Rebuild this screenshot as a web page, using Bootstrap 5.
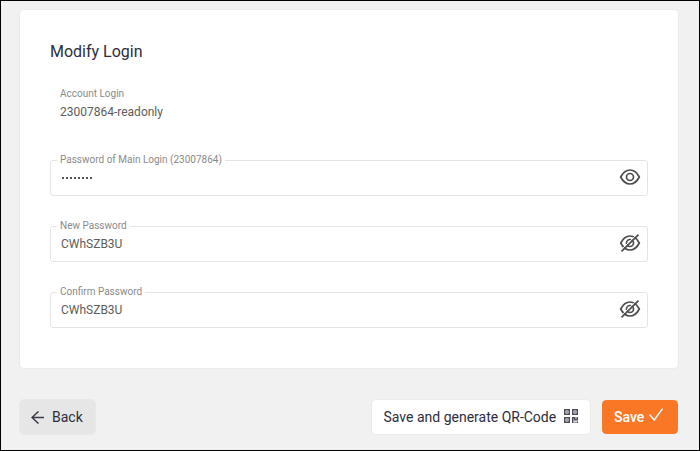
<!DOCTYPE html>
<html lang="en">
<head>
<meta charset="utf-8">
<meta name="viewport" content="width=device-width, initial-scale=1">
<title>Modify Login</title>
<link href="https://cdn.jsdelivr.net/npm/bootstrap@5.3.0/dist/css/bootstrap.min.css" rel="stylesheet">
<style>
body { font-family: Roboto, sans-serif; background: #f1f1f1; color: #2c2d3e; }
.page { height: 451px; border: 1px solid #000; padding: 8px 20px 0 18px; overflow: hidden; }
.panel { height: 360px; border: 1px solid #ebebeb; border-radius: 5px; padding: 30px; }
.title { font-size: 16px; line-height: 24px; font-weight: 400; margin: 0; }
.caption { font-size: 10px; line-height: 12px; color: #8a8a8a; }
.account { padding-left: 10px; margin-top: 24px; height: 72px; }
.value { font-size: 12px; line-height: 16px; color: #5c5c5c; }
.account .value { margin-top: 4px; }
.field { height: 36px; border: 1px solid #e4e4e4; border-radius: 3px; margin: 6px 0 30px; padding: 0 6px 0 10px; }
.field .caption { top: -7px; left: 6px; padding: 0 3px; background: #fff; white-space: nowrap; }
.field input { border: 0; outline: 0; padding: 0; font-size: 12px; line-height: 16px; color: #5c5c5c; background: none; }
.dots { gap: 2px; padding: 0 0 1px 1px; }
.dots i { width: 2px; height: 2px; background: #555; }
.eye { width: 22px; height: 18px; margin-bottom: 2px; fill: none; stroke: #4e4e4e; stroke-width: 1.700; }
.actions { margin-top: 30px; }
.act { height: 36px; font-size: 14px; line-height: 20px; border-radius: 5px; padding: 0 11px; color: #2c2d3e; border: 1px solid #ebebeb; white-space: nowrap; }
.act-back { background: #e6e6e6; border-color: #e9e9e9; width: 77px; }
.act-qr { background: #fff; width: 220px; padding-left: 11.500px; }
.qr { margin: 0 0 2px 7.500px; }
.act-save { background: #fa7726; border: 1px solid #f6f1ee; background-clip: padding-box; color: #fff; width: 78px; margin-left: 10px; padding-left: 12px; font-weight: 500; gap: 5px; }
</style>
</head>
<body>
<main class="page">
  <section class="panel bg-white">
    <h1 class="title">Modify Login</h1>
    <div class="account">
      <div class="caption">Account Login</div>
      <div class="value">23007864-readonly</div>
    </div>
    <div class="field position-relative d-flex align-items-center justify-content-between mt-0">
      <label class="caption position-absolute">Password of Main Login (23007864)</label>
      <div class="dots d-flex" aria-label="Hidden password"><i></i><i></i><i></i><i></i><i></i><i></i><i></i><i></i></div>
      <svg class="eye" viewBox="0 0 22 18"><path d="M1.700 9C4.200 4.100 7.300 2 11 2s6.800 2.100 9.300 7c-2.500 4.900-5.600 7-9.300 7S4.200 13.900 1.700 9z"/><circle cx="11" cy="9" r="3.500"/></svg>
    </div>
    <div class="field position-relative d-flex align-items-center justify-content-between">
      <label class="caption position-absolute" for="np">New Password</label>
      <input id="np" type="text" value="CWhSZB3U">
      <svg class="eye" viewBox="0 0 22 18"><path d="M1.700 9C4.200 4.100 7.300 2 11 2s6.800 2.100 9.300 7c-2.500 4.900-5.600 7-9.300 7S4.200 13.900 1.700 9z"/><circle cx="11" cy="9" r="3.500"/><path d="M1.500 16.300 18.300 0" stroke="#fff" stroke-width="1"/><path d="M2.500 17.300 19.500.7"/></svg>
    </div>
    <div class="field position-relative d-flex align-items-center justify-content-between">
      <label class="caption position-absolute" for="cp">Confirm Password</label>
      <input id="cp" type="text" value="CWhSZB3U">
      <svg class="eye" viewBox="0 0 22 18"><path d="M1.700 9C4.200 4.100 7.300 2 11 2s6.800 2.100 9.300 7c-2.500 4.900-5.600 7-9.300 7S4.200 13.900 1.700 9z"/><circle cx="11" cy="9" r="3.500"/><path d="M1.500 16.300 18.300 0" stroke="#fff" stroke-width="1"/><path d="M2.500 17.300 19.500.7"/></svg>
    </div>
  </section>
  <div class="actions d-flex">
    <button class="btn act act-back d-flex align-items-center me-auto">
      <svg class="me-2 flex-shrink-0" width="13" height="13" viewBox="0 0 13 13" fill="none" stroke="#3b3a4a" stroke-width="1.500"><path d="M13 6.500H1M7.500.500 1 6.500l6.500 6"/></svg>Back
    </button>
    <button class="btn act act-qr d-flex align-items-center">
      Save and generate QR-Code
      <svg class="qr flex-shrink-0" width="14" height="14" viewBox="0 0 14 14" fill="none" stroke="#4b4a58" stroke-width="1.500"><path d="M.750.750h4.500v4.500H.750zM8.750.750h4.500v4.500h-4.500zM.750 8.750h4.500v4.500H.750z"/><path d="M2.300 3h1.400M10.300 3h1.400M2.300 11h1.400M8.750 14V8.750h2v2h2.500V8M10.500 13.200h1M12.500 13.200H14"/></svg>
    </button>
    <button class="btn act act-save d-flex align-items-center">
      Save
      <svg class="mb-1 flex-shrink-0" width="14" height="14" viewBox="0 0 14 14" fill="none" stroke="#fff" stroke-width="1.400"><path d="m.5 6.500 4.700 5.500L13.500.7"/></svg>
    </button>
  </div>
</main>
<script src="https://cdn.jsdelivr.net/npm/bootstrap@5.3.0/dist/js/bootstrap.bundle.min.js"></script>
</body>
</html>
